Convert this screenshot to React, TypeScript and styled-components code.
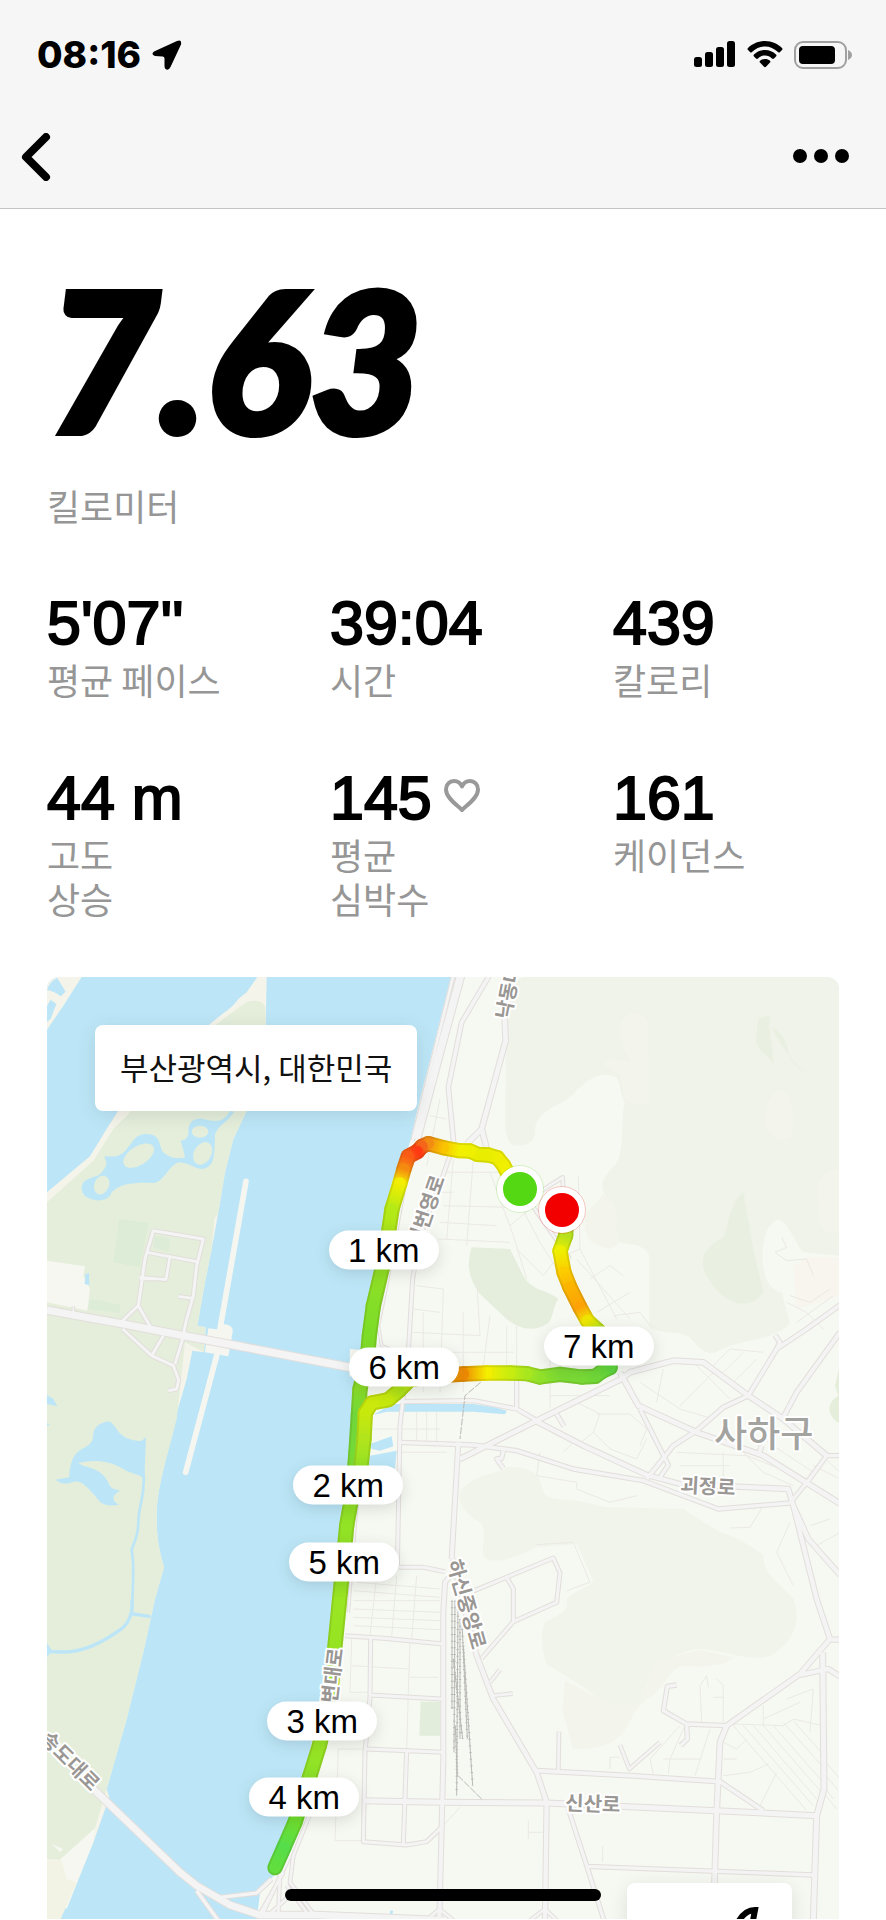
import React from 'react';
import styled, { createGlobalStyle } from 'styled-components';

const GlobalStyle = createGlobalStyle`
  *, *::before, *::after { box-sizing: border-box; }
  html, body { margin: 0; padding: 0; background: #fff; }
  body {
    font-family: 'Liberation Sans', 'Noto Sans CJK KR', sans-serif;
    color: #000;
    overflow-x: hidden;
  }
  button { border: 0; padding: 0; background: none; font: inherit; color: inherit; cursor: pointer; }
`;

const Page = styled.div`
  display: flex;
  flex-direction: column;
  min-height: 100vh;
`;

const Header = styled.header`
  background: #f6f6f6;
  border-bottom: 1px solid #c4c4c4;
`;

const StatusBar = styled.div`
  display: flex;
  align-items: center;
  justify-content: space-between;
  height: 109px;
  padding: 0 34px 0 37px;
`;

const StatusGroup = styled.div`
  display: flex;
  align-items: center;
  gap: 11px;
`;

const Clock = styled.time`
  font-family: Inter, sans-serif;
  font-size: 37px;
  font-weight: 800;
  line-height: 40px;
`;

const NavBar = styled.nav`
  display: flex;
  align-items: center;
  justify-content: space-between;
  height: 99px;
  padding: 0 37px 4px 21px;
`;

const IconButton = styled.button`
  display: flex;
  align-items: center;
  height: 64px;
`;

const Main = styled.main`
  display: flex;
  flex-direction: column;
  padding: 0 47px;
`;

const Distance = styled.h1`
  margin: 32px 0 8px;
  font-family: Lato, sans-serif;
  font-size: 194px;
  font-weight: 900;
  font-style: italic;
  line-height: 234px;
  -webkit-text-stroke: 6px #000;
`;

const Label = styled.div`
  font-family: 'Noto Sans CJK KR', sans-serif;
  font-size: 36px;
  font-weight: 400;
  line-height: 44px;
  color: #969696;
  white-space: pre-line;
`;

const Stats = styled.dl`
  display: grid;
  grid-template-columns: repeat(3, 1fr);
  column-gap: 57px;
  row-gap: 63px;
  margin: 62px 0 57px;
`;

const Stat = styled.div`
  display: flex;
  flex-direction: column-reverse;
  justify-content: flex-end;
`;

const Value = styled.dd`
  display: flex;
  align-items: center;
  gap: 12px;
  margin: 0;
  font-size: 61px;
  font-kerning: none;
  line-height: 68px;
  -webkit-text-stroke: 2px #000;
  white-space: nowrap;
`;

const MapCard = styled.section`
  position: relative;
  overflow: hidden;
  border-radius: 12px 12px 0 0;
`;

const MapSvg = styled.svg`
  display: block;
  width: 100%;
  height: auto;
`;

const Place = styled.div`
  position: absolute;
  top: 48px;
  left: 48px;
  padding: 20px 25px 22px;
  border-radius: 8px;
  background: #fff;
  box-shadow: 0 4px 20px rgba(0, 0, 0, 0.1);
  font-family: 'Noto Sans CJK KR', sans-serif;
  font-size: 31px;
  line-height: 44px;
  color: #111;
  white-space: nowrap;
`;

const Pin = styled.div`
  position: absolute;
  transform: translate(-50%, -50%);
`;

const KmPin = styled(Pin)`
  width: 110px;
  border-radius: 20px;
  background: #fff;
  box-shadow: 0 4px 16px rgba(0, 0, 0, 0.12);
  font-size: 33px;
  line-height: 39px;
  text-align: center;
  white-space: nowrap;
`;

const EndPin = styled(Pin)<{ $color: string }>`
  width: 46px;
  height: 46px;
  border: 6px solid #fff;
  border-radius: 50%;
  background: ${(p) => p.$color};
  outline: 1px solid ${(p) => p.$color}33;
`;

const Badge = styled.div`
  position: absolute;
  right: 47px;
  bottom: -24px;
  width: 165px;
  height: 60px;
  border-radius: 8px;
  background: #fff;
  box-shadow: 0 4px 20px rgba(0, 0, 0, 0.1);
`;

const BadgeMark = styled.svg`
  display: block;
  margin: 22px 0 0 100px;
`;

const HomeIndicator = styled.div`
  position: fixed;
  left: 50%;
  bottom: 19px;
  width: 316px;
  height: 12px;
  border-radius: 6px;
  background: #000;
  transform: translateX(-50%);
`;

/* Drawing units: three per pixel, origin at the tile corner. */
const VIEW = { x: 51, y: 54, w: 2376, h: 2826 };

const at = (u: number, v: number): React.CSSProperties => ({
  left: `${((u - VIEW.x) / VIEW.w) * 100}%`,
  top: `${((v - VIEW.y) / VIEW.h) * 100}%`,
});

const roads: [number, string][] = [
  [9, 'M370 815 L520 840 L500 920 L490 1010 L470 1080 L455 1150 L435 1215'],
  [9, 'M370 815 L345 900 L325 1040 L362 1105'],
  [8, 'M350 880 L500 908 M420 890 L408 962 L328 955 M445 1012 L488 1018 M330 960 H410'],
  [9, 'M325 1040 L270 1092 M278 1110 L365 1190 L430 1220 L446 1262 L440 1290 L415 1295 M400 1130 L365 1190'],
  [22, 'M51 1053 L130 1068 L280 1095 L460 1130 L620 1160 L960 1225 L1040 1240'],
  [5, 'M130 1068 V1042'],
  [20, 'M190 2490 L450 2740 L500 2780 L600 2838 L690 2868 H860 L1240 2884'],
  [10, 'M570 2815 L680 2802 L725 2760 M500 2795 L565 2885'],
  [8, 'M840 2565 L790 2690 L780 2770 L850 2865 M780 2690 L700 2860 M760 2740 L690 2865 M750 2745 L745 2860 M770 2780 L830 2860 M800 2790 L720 2865'],
  [22, 'M1292 50 L1232 270 L1160 540'],
  [8, 'M1270 50 L1148 545'],
  [11, 'M1378 50 L1295 190 L1255 385 L1272 560'],
  [14, 'M1424 180 L1427 245 L1355 510 L1368 560 M1355 510 L1310 555'],
  [9, 'M1270 560 L1225 690 L1170 830 L1148 960 L1135 1180 L1110 1400 L1102 1830'],
  [5, 'M1140 600 L1110 760 L1068 990 L1045 1100 L1055 1160 L1080 1170'],
  [5, 'M985 1600 L975 1700 L955 1960'],
  [8, 'M1368 560 L1500 730 L1620 900 M1535 695 L1598 655 L1600 710'],
  [10, 'M1110 1328 L1330 1325 L1460 1350 L1530 1390'],
  [10, 'M1110 1450 L1330 1458 L1460 1475 L1630 1530 L1840 1565 L2065 1650 L2280 1632 L2335 1565 L2390 1490 H2430'],
  [13, 'M1515 1385 L1660 1460 L1850 1548 L1950 1575 L2275 1590 L2290 1640 L2335 1740 L2430 1848'],
  [14, 'M1290 1500 L1530 1380 L1770 1262 L1800 1240 L1930 1205 L2020 1210 L2155 1310 L2260 1380 L2390 1490'],
  [14, 'M1770 1240 L1825 1340 L2000 1420 L2200 1490 L2430 1634'],
  [10, 'M1830 1350 L1915 1518 L1890 1555'],
  [11, 'M1850 1560 L1930 1460 L2000 1415 L2080 1345 L2155 1310 L2240 1170 L2330 1110 L2430 1038 M2240 1170 L2250 1150 L2235 1128'],
  [12, 'M2260 1375 L2300 1300 L2430 1120 M2185 1490 L2195 1460'],
  [10, 'M1460 1265 V1348 M1580 1365 L1602 1402 M1420 1475 L1415 1498 L1400 1500 L1420 1528'],
  [12, 'M1285 1450 L1265 1800 M1270 1840 L1245 1870 L1240 1960 L1240 2400 L1228 2884'],
  [9, 'M1106 1825 L1180 1825 L1245 1838'],
  [13, 'M1268 1800 L1340 2090 L1390 2220 L1520 2440 L1550 2530 L1545 2884'],
  [9, 'M1320 1900 L1570 1797 L1590 1842 L1580 1930 L1450 1988 L1355 2098 M1430 1855 L1450 1890 V1988'],
  [8, 'M1380 2170 L1410 2132 M1390 2210 L1448 2204 M1587 2318 L1585 2435 M1770 2358 L1798 2430 L1890 2350'],
  [11, 'M1520 2435 L1800 2450 L2070 2468 L2200 2555'],
  [15, 'M1000 2525 L1230 2530 L1550 2532 L2060 2555 L2360 2570'],
  [14, 'M2090 2300 L2070 2350 L2060 2560 L2050 2884'],
  [13, 'M2090 2300 L2310 2145 L2400 2040 L2360 1920 L2290 1640 M2400 2042 H2430 M2310 2148 L2395 2130 L2430 2152'],
  [15, 'M2378 2080 L2382 2490 L2360 2570 L2350 2884'],
  [10, 'M1670 2722 L2350 2748 M1615 2550 L1670 2720 L1722 2884'],
  [10, 'M1940 2178 L1912 2182 L1900 2255 L1970 2295 L2090 2300 M1970 2295 L1972 2340 L1952 2360'],
  [9, 'M1022 2035 L1020 2215 L1005 2380 L1000 2648 L1130 2658 L1190 2648 L1240 2600'],
  [9, 'M945 2030 L1060 2038 L1240 2055 M1020 2208 L1235 2220 M1010 2370 L1240 2380 M1130 2375 L1120 2655'],
  [8, 'M1545 2850 L1500 2884 M1545 2850 L1580 2884 M1228 2850 L1190 2884 M1228 2850 L1270 2884'],
];

const streets =
  'M1230 420 L1190 620 M1250 480 L1200 470 M1240 640 H1430 M1230 700 H1270 M1270 600 L1250 840 M1330 600 L1310 860 M1240 740 L1440 745 ' +
  'M1230 790 L1400 800 M1225 840 L1440 850 M1380 640 L1450 830 L1490 960 M1420 640 L1530 850 L1600 960 M1440 800 L1560 700 ' +
  'M1645 650 L1650 870 L1760 1080 M1650 870 L1580 900 M1460 870 L1540 950 L1570 910 M1680 960 L1740 920 L1780 950 M1640 900 L1800 1080 ' +
  'M1150 1050 L1230 1060 M1160 980 L1240 990 L1230 1300 M1150 1120 L1350 1130 L1340 960 M1180 1060 V1300 M1300 1060 V1300 M1380 1070 L1360 1220 M1150 1180 H1450 M1430 1100 V1220 M1460 1100 V1220 ' +
  'M1140 1250 H1560 M1560 1200 V1345 M1560 1310 H1740 M1800 1000 L1700 1060 M1750 1070 L1830 1060 L1860 1100 M1740 1170 L1800 1190 M1580 1120 L1680 1150 ' +
  'M1030 1410 H1230 M1160 1360 V1450 M1190 1360 V1450 M1220 1360 V1450 M1100 1480 H1250 M1640 1330 L1710 1365 L1690 1420 L1640 1460 M1700 1365 H1800 L1850 1410 L1830 1460 ' +
  'M1830 1270 L1950 1350 L2050 1380 M1900 1230 L1880 1330 M1950 1340 L2050 1240 M1990 1210 L2100 1320 M2050 1220 L2100 1170 L2200 1180 M2080 1240 L2140 1180 M2100 1280 L2180 1200 M1690 1420 L1740 1470 L1820 1500 L1850 1440 ' +
  'M1940 1480 L2150 1490 L2330 1560 M1950 1520 H2100 M2080 1480 V1570 M2100 1440 L2200 1540 L2290 1580 M2200 1440 L2350 1540 M2300 1420 L2430 1540 M2350 1520 L2430 1560 ' +
  'M1530 1480 L1520 1550 L1640 1570 L1640 1590 L1740 1630 L1820 1610 M1600 1480 L1640 1440 M2200 1640 L2160 1705 L2100 1707 M2280 1690 L2240 1780 L2290 1880 M2340 1700 L2400 1680 M2360 1760 L2430 1720 ' +
  'M1520 1757 L1630 1750 L1680 1870 L1610 1895 M960 1840 L1060 1845 M980 1870 L1230 1890 M970 1895 L1230 1915 M970 1925 H1230 M970 1950 L1230 1960 M970 1975 L1230 1985 M970 2000 L1230 2012 M1040 1850 L1020 2030 M1100 1850 L1085 2035 M1160 1850 L1145 2040 ' +
  'M965 2040 L960 2200 H1020 M965 2120 L1140 2130 M1140 2050 L1135 2200 L1130 2370 M1140 2155 H1225 M925 2370 L915 2645 H1000 M925 2370 H1010 M1290 2545 L1240 2600 ' +
  'M1495 2585 V2640 M1495 2620 H1540 M1718 2660 V2710 M2010 2180 L2015 2290 M2080 2290 V2180 L2060 2160 M2010 2180 L2030 2150 L2035 2185 M2050 2215 H2080 M1740 2430 V2395 H1770 M1950 2300 L1860 2400 L1870 2445 M1965 2300 L1920 2400 L1915 2445 M2040 2310 L1995 2450 M1900 2400 H2010 ' +
  'M2110 2300 L2330 2555 M2140 2300 L2350 2540 M2170 2300 L2360 2520 M2200 2300 L2370 2495 M2230 2300 L2375 2465 M2260 2290 L2375 2420 M2290 2285 L2378 2385 M2110 2295 L2260 2300 L2290 2280 L2378 2300 M2200 2240 L2200 2300 M2270 2220 L2350 2190 L2340 2320 M2200 2280 L2310 2230 ' +
  'M2080 2350 L2120 2370 L2150 2340 M2080 2400 H2120 M2080 2450 L2160 2440 L2215 2415 M2240 2440 L2190 2540 M2380 2400 L2430 2460 M2380 2440 L2425 2495 M2380 2480 L2410 2520 M2380 2500 L2420 2550';

const hillPaths =
  'M2255 835 L2270 865 L2235 880 L2270 905 L2330 900 L2350 950 M2280 1010 L2340 1030 L2400 990 M2270 1030 L2330 1060 L2380 1110 M2300 1090 L2410 1010';

const rails =
  'M1266 1925 L1266 2250 M1275 1925 L1272 2380 M1284 1930 L1280 2510 M1290 1980 L1290 2340 M1296 1990 L1312 2340 M1300 2060 L1328 2480 M1270 2100 L1298 2340 M1276 2300 L1282 2450';

const greens: [string, string][] = [
  ['#eff3e9', 'M1480 54 Q1440 70 1428 120 L1426 500 Q1430 562 1458 560 Q1515 560 1515 520 C1512 450 1600 440 1630 405 C1660 370 1710 330 1760 355 C1775 380 1770 410 1785 430 C1770 480 1785 550 1765 600 C1755 630 1710 650 1718 690 C1735 740 1760 745 1762 775 C1745 810 1750 835 1770 848 C1800 860 1840 850 1858 890 L1858 1105 C1900 1130 1950 1110 1985 1140 C2010 1170 2030 1190 2060 1178 C2130 1140 2200 1150 2260 1110 L2427 960 V54Z'],
  ['#f6f8f2', 'M2290 1130 L2255 1000 C2180 990 2190 830 2220 800 C2260 740 2290 850 2320 880 L2427 890 V1200Z'],
  ['#f8f5ee', 'M2290 920 L2330 895 H2427 V1010 L2300 1050Z'],
  ['#f3f4eb', 'M1770 350 L1720 315 L1735 300 L1800 305 C1760 240 1760 180 1800 165 C1850 160 1855 180 1855 210 L1858 430 Q1830 445 1785 425Z M2205 470 C2210 400 2260 370 2280 420 C2300 470 2285 510 2285 535 C2240 560 2200 520 2205 470Z M2360 690 C2370 640 2400 635 2427 632 V820 Q2370 830 2368 780Z'],
  ['#e9f0e2', 'M2185 180 L2220 168 L2218 200 L2232 315 C2200 280 2170 260 2178 230Z M2225 205 C2260 220 2275 260 2280 300 L2350 370 L2290 305 C2260 270 2240 240 2225 205Z M2140 698 L2170 870 L2200 1000 C2160 1060 2080 1040 2030 950 C2000 900 2030 860 2080 835 C2100 790 2095 740 2140 698Z'],
  ['#f3f5ec', 'M1718 705 C1760 720 1770 780 1755 800 L1770 850 Q1740 880 1720 865 Q1660 850 1665 790 C1660 750 1700 740 1718 705Z'],
  ['#e5eddc', 'M1325 865 L1440 870 L1475 940 C1500 1000 1550 990 1585 1020 C1565 1050 1570 1085 1550 1095 C1510 1120 1470 1110 1430 1080 L1350 1005 Q1300 940 1325 865Z'],
  ['#f0f4ea', 'M1290 1600 C1330 1540 1400 1550 1430 1525 C1480 1520 1510 1535 1528 1560 C1540 1600 1540 1620 1600 1622 C1680 1625 1720 1650 1750 1645 L1960 1650 L2070 1720 C2120 1735 2180 1770 2200 1790 C2200 1850 2260 1880 2290 1920 C2320 1990 2280 2060 2220 2090 C2150 2110 2080 2070 2000 2070 C1940 2080 1920 2110 1870 2120 C1850 2160 1850 2230 1800 2240 C1730 2240 1690 2210 1670 2190 L1550 2115 C1530 2060 1535 2010 1545 1990 C1580 1970 1620 1960 1610 1920 C1640 1890 1690 1880 1690 1865 L1640 1755 L1520 1765 Q1410 1820 1370 1800 C1340 1780 1380 1720 1350 1690 Q1280 1650 1290 1600Z'],
  ['#f3f5ec', 'M1605 2165 C1680 2200 1720 2240 1800 2240 C1850 2220 1850 2190 1870 2110 C1940 2100 2000 2060 2040 2080 L2110 2095 Q2080 2130 1960 2120 C1910 2130 1900 2200 1850 2220 C1810 2250 1800 2300 1770 2330 C1740 2360 1700 2370 1628 2370 Q1610 2300 1597 2250Z'],
  ['#e4eedb', 'M2427 1230 L2415 1280 L2425 1310 C2390 1330 2390 1370 2427 1392Z'],
  ['#e2eedb', 'M1172 2228 H1230 V2330 H1168Z'],
];

type Stop = [number, number, string];

const outbound: Stop[] = [
  [1440, 655, '#f0ef00'], [1420, 618, '#f0ef00'], [1402, 596, '#efee00'], [1375, 588, '#e9ee00'], [1342, 586, '#e9ee00'],
  [1320, 576, '#eef000'], [1288, 575, '#f2f000'], [1240, 566, '#f9c400'], [1195, 554, '#f28c12'], [1176, 562, '#f4651a'],
  [1162, 578, '#ff3a12'], [1135, 592, '#fb5c15'], [1122, 630, '#f58a10'], [1110, 672, '#f3ee00'], [1086, 750, '#b6ea16'],
  [1074, 830, '#a8e41c'], [1056, 930, '#93e025'], [1030, 1040, '#84de28'], [1018, 1130, '#7cdc28'], [1012, 1200, '#84de28'],
  [990, 1290, '#8add28'], [985, 1370, '#70d63a'], [978, 1480, '#74da38'], [968, 1600, '#8fe025'], [950, 1700, '#92e226'],
  [938, 1830, '#92e226'], [928, 1930, '#9ae624'], [914, 2070, '#96e322'], [900, 2230, '#92e226'], [868, 2360, '#9ae624'],
  [840, 2450, '#8be028'], [795, 2590, '#6fe030'], [762, 2665, '#56dd4a'], [735, 2726, '#62de3e'],
];

const inbound: Stop[] = [
  [1610, 770, '#7fd238'], [1607, 830, '#b4e01e'], [1590, 876, '#eef000'], [1602, 940, '#fccb00'], [1620, 985, '#fbb400'],
  [1650, 1045, '#fca208'], [1672, 1085, '#eee600'], [1705, 1115, '#b8e21c'], [1740, 1180, '#60d83e'], [1740, 1226, '#5fd840'],
  [1715, 1238, '#68d83a'], [1696, 1252, '#70d838'], [1655, 1254, '#78da36'], [1590, 1246, '#7cda34'], [1530, 1254, '#90e02a'],
  [1490, 1244, '#a8e61e'], [1440, 1242, '#c8ec10'], [1370, 1242, '#f4ee00'], [1300, 1245, '#ee8a04'], [1230, 1250, '#f0a808'],
  [1140, 1262, '#c0e414'], [1108, 1294, '#aee218'], [1075, 1322, '#c4e80e'], [1025, 1332, '#cbe90c'], [1006, 1362, '#c8e90c'],
  [1002, 1440, '#b2e41c'], [992, 1530, '#92e226'],
];

const toPoints = (stops: Stop[]) => stops.map(([u, v]) => `${u},${v}`).join(' ');

function Route({ id, stops }: { id: string; stops: Stop[] }) {
  const segments = stops.slice(1).map((end, i) => ({ start: stops[i], end, key: `${id}${i}` }));
  const draw = (width: number) =>
    segments.map(({ start, end, key }) => (
      <line key={key} x1={start[0]} y1={start[1]} x2={end[0]} y2={end[1]} stroke={`url(#${key})`} strokeWidth={width} />
    ));
  return (
    <g strokeLinecap="round" strokeLinejoin="round" fill="none">
      <defs>
        {segments.map(({ start, end, key }) => (
          <linearGradient key={key} id={key} gradientUnits="userSpaceOnUse" x1={start[0]} y1={start[1]} x2={end[0]} y2={end[1]}>
            <stop offset="0" stopColor={start[2]} />
            <stop offset="1" stopColor={end[2]} />
          </linearGradient>
        ))}
      </defs>
      {draw(46)}
      <polyline points={toPoints(stops)} stroke="#505000" strokeOpacity="0.14" strokeWidth="46" />
      {draw(34)}
    </g>
  );
}

const mapLabels = [
  { text: '낙동대로', u: 1440, v: 182, angle: -79, size: 20 },
  { text: '신번영로', u: 1172, v: 868, angle: -71, size: 20 },
  { text: '강변대로', u: 912, v: 2290, angle: -83, size: 20 },
  { text: '하신중앙로', u: 1250, v: 1808, angle: 74, size: 20 },
  { text: '송도대로', u: 28, v: 2344, angle: 45, size: 20 },
  { text: '괴정로', u: 1950, v: 1598, angle: 3, size: 20 },
  { text: '신산로', u: 1604, v: 2552, angle: 2, size: 20 },
  { text: '사하구', u: 2052, v: 1465, angle: 0, size: 36 },
];

const kmPins = [
  { km: 6, u: 1123, v: 1223 },
  { km: 1, u: 1061, v: 873 },
  { km: 2, u: 955, v: 1578 },
  { km: 5, u: 943, v: 1810 },
  { km: 3, u: 877, v: 2285 },
  { km: 4, u: 823, v: 2514 },
  { km: 7, u: 1706, v: 1160 },
];

function MapDrawing() {
  const water = '#bce6f7';
  return (
    <MapSvg viewBox="17 18 792 942" role="img" aria-label="러닝 경로 지도">
      <g transform="scale(0.33333)">
        <rect x="51" y="54" width="2376" height="2830" fill="#f6f8f2" />
        <path fill={water} d="M51 54 H1264 L1165 440 L1140 550 L1080 720 L1040 960 L1015 1130 L1000 1250 L985 1400 L975 1500 L950 1700 L920 2000 L880 2200 L820 2460 L740 2740 L690 2800 L680 2884 H51Z" />

        <path fill="#f5f4ea" d="M51 54 H155 L100 140 L51 212Z M51 700 L180 592 L230 510 L268 450 L540 195 C580 160 605 150 625 120 L650 100 L682 54 H710 L707 200 L650 456 L610 540 L585 640 L565 760 L545 870 L525 970 L502 1100 L527 1105 L522 1180 L487 1175 L470 1260 L435 1380 C410 1500 383 1580 380 1660 C378 1740 390 1780 402 1825 L375 1920 L340 2080 L290 2280 L230 2490 L238 2515 L190 2650 L90 2884 H51Z" />
        <path fill="#e4eedb" d="M51 730 L190 605 L250 510 L310 450 L560 195 L650 128 Q700 118 706 145 L707 200 L650 456 L610 540 L585 640 L565 760 L553 780 L545 870 L525 970 L502 1100 L527 1105 L522 1180 L465 1150 L440 1380 C410 1500 383 1580 380 1660 C378 1740 390 1780 402 1825 L375 1920 L340 2080 L290 2280 L230 2490 L195 2608 L90 2702 L51 2700Z" />
        <path fill="#f6f7f0" d="M51 905 L165 922 L160 950 L180 990 L172 1055 L51 1030Z M195 2608 L90 2702 L51 2800 L110 2850 L190 2650Z M65 2655 L100 2670 L90 2680Z" />
        <path fill="#f2f3e4" d="M51 2705 H95 L110 2760 L140 2770 L90 2884 H51Z" />
        <path fill="#dcecd6" d="M268 780 L355 792 L330 925 L250 910Z M375 830 L420 840 L415 880 L370 865Z M180 1020 L272 1038 L268 1062 L175 1050Z" />
        <g fill={water}>
          <path d="M82 57 L107 98 L92 112 Q70 95 51 93 Q60 65 82 57Z M62 122 L79 135 L62 180 L51 188 V140Z" />
          <path d="M155 685 C160 650 205 660 215 640 C235 620 230 605 222 592 C260 595 275 590 290 570 C310 550 310 530 345 525 C395 522 385 560 400 580 C420 600 450 600 465 595 C460 570 455 555 452 545 C470 545 478 530 475 510 C478 490 490 475 520 480 C560 490 580 490 600 456 L612 458 C595 490 550 505 555 540 C552 590 555 620 520 630 C490 630 470 605 440 612 C410 630 400 670 370 672 C330 670 270 670 245 700 C235 730 195 730 165 712 Q155 700 155 685Z" />
          <path d="M190 1425 C190 1400 225 1385 240 1388 C265 1405 260 1435 320 1445 C335 1450 340 1440 348 1435 L343 1560 C320 1540 300 1545 280 1530 C240 1505 190 1500 145 1512 C165 1530 210 1520 235 1570 C240 1595 265 1590 270 1597 C240 1610 250 1630 267 1637 C220 1645 210 1630 195 1610 C170 1585 160 1565 130 1568 C100 1580 90 1570 75 1562 L118 1555 C120 1490 145 1475 165 1465 Q190 1455 190 1425Z" />
          <path d="M51 1308 L70 1320 L82 1342 L51 1335Z M51 1392 L60 1397 L51 1400Z M51 2052 L66 2075 L51 2095Z M166 945 L177 942 L178 978 L164 975Z" />
          <path d="M1030 1368 L1085 1335 H1330 L1395 1345 L1430 1355 L1425 1366 L1330 1358 H1070Z M1020 1455 L1085 1432 L1090 1462 L1050 1475 L1025 1470Z M1020 1490 L1100 1475 L1095 1530 L1010 1520Z M1080 2855 L1090 2855 L1086 2870 L1080 2868Z" />
        </g>
        <g fill="#e4eedb">
          <ellipse cx="215" cy="678" rx="22" ry="29" transform="rotate(25 215 678)" />
          <ellipse cx="326" cy="590" rx="52" ry="28" transform="rotate(-33 326 590)" />
          <ellipse cx="510" cy="518" rx="25" ry="18" />
          <ellipse cx="518" cy="583" rx="26" ry="36" transform="rotate(30 518 583)" />
        </g>
        <g fill="none" stroke={water} strokeLinecap="round" strokeLinejoin="round">
          <path strokeWidth="8" d="M341 1545 C345 1620 325 1640 325 1690 C325 1740 305 1760 305 1775 C315 1820 308 1870 306 1960" />
          <path strokeWidth="10" d="M306 1925 Q310 1975 280 2005 Q180 2080 100 2079 L55 2078 M310 1965 L358 1972" />
        </g>

        {greens.map(([fill, d], i) => (
          <path key={i} fill={fill} d={d} />
        ))}

        <g stroke="#f6f6f0" strokeWidth="17" strokeLinecap="round">
          <path d="M648 667 L570 1110 M560 1190 L467 1540" />
        </g>
        <path fill="#f6f6f0" d="M535 1108 L570 1112 L575 1095 Q610 1095 608 1118 L595 1192 L525 1180Z M960 1170 L1060 1180 V1260 L958 1252Z" />

        <path d={streets} fill="none" stroke="#ebe9e4" strokeWidth="3" />
        <path d={hillPaths} fill="none" stroke="#ebe8e3" strokeWidth="3" />

        <g fill="none" strokeLinecap="butt" strokeLinejoin="round">
          {roads.map(([w, d], i) => (
            <path key={i} d={d} strokeWidth={w + 6} stroke="#e2dedb" />
          ))}
          {roads.map(([w, d], i) => (
            <path key={i} d={d} strokeWidth={w} stroke="#f5f4f4" />
          ))}
        </g>

        <g fill="none" stroke="#b9b9b6">
          <path d={rails} strokeWidth="3" />
          <path d={rails} strokeWidth="7" strokeDasharray="3 17" />
          <path d="M1352 1270 L1305 1310 L1290 1440 M1284 2450 L1355 2520" strokeWidth="3" strokeDasharray="22 4" />
        </g>

        <Route id="out" stops={outbound} />
        <Route id="in" stops={inbound} />
      </g>

      <g fontFamily="'Noto Sans CJK KR', sans-serif" stroke="#fff" strokeWidth="4" strokeLinejoin="round" paintOrder="stroke">
        {mapLabels.map(({ text, u, v, angle, size }) => (
          <text
            key={text}
            fontSize={size}
            fontWeight={size > 20 ? 500 : 700}
            fill={size > 20 ? '#a3a3a0' : '#9a9794'}
            transform={`translate(${Math.round(u / 3)} ${Math.round(v / 3)}) rotate(${angle})`}
          >
            {text}
          </text>
        ))}
      </g>
    </MapSvg>
  );
}

const HeartIcon = () => (
  <svg width="36" height="38" viewBox="0 0 36 38" fill="none" stroke="#999" strokeWidth="4" strokeLinejoin="round" aria-hidden="true">
    <path d="M18 31 C13 26 2 19 2 10.500 C2 5.500 5.500 2 10 2 C13.500 2 16.500 4 18 7.500 C19.500 4 22.500 2 26 2 C30.500 2 34 5.500 34 10.500 C34 19 23 26 18 31Z" />
  </svg>
);

const stats = [
  { label: '평균 페이스', value: "5'07''" },
  { label: '시간', value: '39:04' },
  { label: '칼로리', value: '439' },
  { label: '고도\n상승', value: '44 m' },
  { label: '평균\n심박수', value: '145', heart: true },
  { label: '케이던스', value: '161' },
];

export default function App() {
  return (
    <Page>
      <GlobalStyle />
      <Header>
        <StatusBar>
          <StatusGroup>
            <Clock>08:16</Clock>
            <svg width="30" height="30" viewBox="0 0 30 30" aria-hidden="true">
              <path d="M25 1 Q30 -1 29 4.500 L18.500 27 Q16.500 31 13.500 29 Q12.500 28 12.500 26 V18.500 Q12.500 16.500 10.500 16.500 L3 16 Q-1.500 14.500 2 11.500Z" />
            </svg>
          </StatusGroup>
          <StatusGroup>
            <svg width="42" height="27" viewBox="0 0 42 27" aria-hidden="true">
              <rect x="0" y="16" width="8" height="10" rx="2.500" />
              <rect x="11" y="11" width="8" height="15" rx="2.500" />
              <rect x="22" y="6" width="8" height="20" rx="2.500" />
              <rect x="33" y="0" width="8" height="26" rx="2.500" />
            </svg>
            <svg width="36" height="27" viewBox="0 0 36 27" aria-hidden="true">
              <path d="M18 0 C25 0 31 3 35 7 Q36 8 35 9 L33 11 Q32 12 31 11 C27 7.500 23 5.500 18 5.500 C13 5.500 9 7.500 5 11 Q4 12 3 11 L1 9 Q0 8 1 7 C5 3 11 0 18 0Z" />
              <path d="M18 9 C22.500 9 26 10.500 29 13.500 Q30 14.500 29 15.500 L27 17.500 Q26 18.300 25 17.500 C23 15.500 21 14.500 18 14.500 C15 14.500 13 15.500 11 17.500 Q10 18.300 9 17.500 L7 15.500 Q6 14.500 7 13.500 C10 10.500 13.500 9 18 9Z" />
              <path d="M18 18 C20 18 21.500 18.600 23 19.800 Q23.800 20.600 23 21.500 L19 25.700 Q18 26.600 17 25.700 L13 21.500 Q12.200 20.600 13 19.800 C14.500 18.600 16 18 18 18Z" />
            </svg>
            <svg width="58" height="28" viewBox="0 0 58 28" aria-hidden="true">
              <rect x="1" y="1" width="51" height="26" rx="8" fill="none" stroke="#a0a0a0" strokeWidth="2" />
              <rect x="5" y="5" width="36" height="18" rx="4" />
              <path d="M54 9 Q58 11 58 14 Q58 17 54 19Z" fill="#a0a0a0" />
            </svg>
          </StatusGroup>
        </StatusBar>
        <NavBar>
          <IconButton type="button" aria-label="뒤로">
            <svg width="32" height="48" viewBox="0 0 32 48" fill="none" stroke="#000" strokeWidth="8" strokeLinecap="round" strokeLinejoin="round">
              <path d="M25 4 L5 24 L25 44" />
            </svg>
          </IconButton>
          <IconButton type="button" aria-label="더 보기">
            <svg width="56" height="16" viewBox="0 0 56 16">
              <circle cx="7" cy="7" r="7" />
              <circle cx="28" cy="7" r="7" />
              <circle cx="49" cy="7" r="7" />
            </svg>
          </IconButton>
        </NavBar>
      </Header>

      <Main>
        <Distance>7.63</Distance>
        <Label>킬로미터</Label>
        <Stats>
          {stats.map(({ label, value, heart }) => (
            <Stat key={label}>
              <Label as="dt">{label}</Label>
              <Value>
                {value}
                {heart && <HeartIcon />}
              </Value>
            </Stat>
          ))}
        </Stats>
        <MapCard>
          <MapDrawing />
          <Place>부산광역시, 대한민국</Place>
          {kmPins.map(({ km, u, v }) => (
            <KmPin key={km} style={at(u, v)}>{km} km</KmPin>
          ))}
          <EndPin $color="#54d813" style={at(1471, 689)} />
          <EndPin $color="#f20000" style={at(1597, 754)} />
          <Badge>
            <BadgeMark width="40" height="30" viewBox="0 0 40 30" aria-hidden="true">
              <path d="M8 24 C13 11 20 5 28 5 L24 26" fill="none" stroke="#000" strokeWidth="6" />
            </BadgeMark>
          </Badge>
        </MapCard>
      </Main>
      <HomeIndicator />
    </Page>
  );
}
